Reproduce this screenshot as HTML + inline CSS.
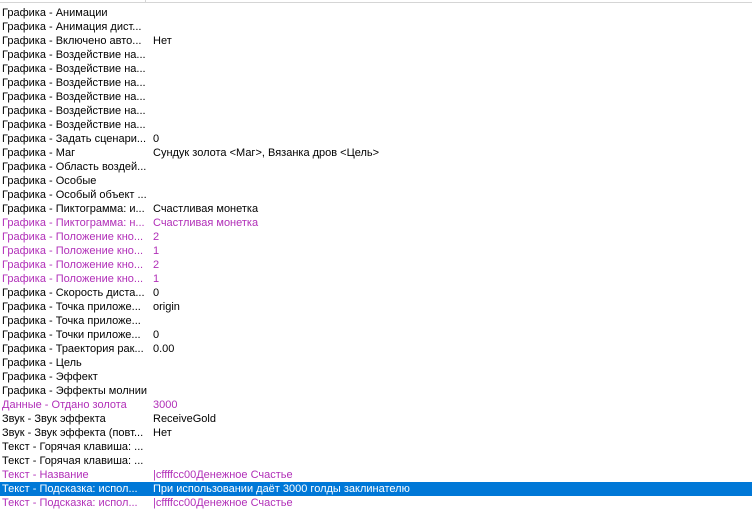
<!DOCTYPE html><html><head><meta charset="utf-8"><style>
body{margin:0;width:752px;height:511px;background:#fff;overflow:hidden;position:relative;font-family:"Liberation Sans","DejaVu Sans",sans-serif;font-size:11px;color:#000}
.hd{position:absolute;left:0;top:0;width:752px;height:2px;border-bottom:1px solid #d5d5d5}
.hd i{position:absolute;left:145px;top:0;width:1px;height:3px;background:#d5d5d5}
.r{position:absolute;left:0;width:752px;height:14px;line-height:15px;white-space:nowrap}
.r span{position:absolute;left:2px}.r b{font-weight:normal;position:absolute;left:153px}
.m{color:#b12fb8}.s{background:#0078d7;color:#fff}
</style></head><body><div class="hd"><i></i></div>
<div class="r" style="top:6px"><span>Графика - Анимации</span></div>
<div class="r" style="top:20px"><span>Графика - Анимация дист...</span></div>
<div class="r" style="top:34px"><span>Графика - Включено авто...</span><b>Нет</b></div>
<div class="r" style="top:48px"><span>Графика - Воздействие на...</span></div>
<div class="r" style="top:62px"><span>Графика - Воздействие на...</span></div>
<div class="r" style="top:76px"><span>Графика - Воздействие на...</span></div>
<div class="r" style="top:90px"><span>Графика - Воздействие на...</span></div>
<div class="r" style="top:104px"><span>Графика - Воздействие на...</span></div>
<div class="r" style="top:118px"><span>Графика - Воздействие на...</span></div>
<div class="r" style="top:132px"><span>Графика - Задать сценари...</span><b>0</b></div>
<div class="r" style="top:146px"><span>Графика - Маг</span><b>Сундук золота &lt;Маг&gt;, Вязанка дров &lt;Цель&gt;</b></div>
<div class="r" style="top:160px"><span>Графика - Область воздей...</span></div>
<div class="r" style="top:174px"><span>Графика - Особые</span></div>
<div class="r" style="top:188px"><span>Графика - Особый объект ...</span></div>
<div class="r" style="top:202px"><span>Графика - Пиктограмма: и...</span><b>Счастливая монетка</b></div>
<div class="r m" style="top:216px"><span>Графика - Пиктограмма: н...</span><b>Счастливая монетка</b></div>
<div class="r m" style="top:230px"><span>Графика - Положение кно...</span><b>2</b></div>
<div class="r m" style="top:244px"><span>Графика - Положение кно...</span><b>1</b></div>
<div class="r m" style="top:258px"><span>Графика - Положение кно...</span><b>2</b></div>
<div class="r m" style="top:272px"><span>Графика - Положение кно...</span><b>1</b></div>
<div class="r" style="top:286px"><span>Графика - Скорость диста...</span><b>0</b></div>
<div class="r" style="top:300px"><span>Графика - Точка приложе...</span><b>origin</b></div>
<div class="r" style="top:314px"><span>Графика - Точка приложе...</span></div>
<div class="r" style="top:328px"><span>Графика - Точки приложе...</span><b>0</b></div>
<div class="r" style="top:342px"><span>Графика - Траектория рак...</span><b>0.00</b></div>
<div class="r" style="top:356px"><span>Графика - Цель</span></div>
<div class="r" style="top:370px"><span>Графика - Эффект</span></div>
<div class="r" style="top:384px"><span>Графика - Эффекты молнии</span></div>
<div class="r m" style="top:398px"><span>Данные - Отдано золота</span><b>3000</b></div>
<div class="r" style="top:412px"><span>Звук - Звук эффекта</span><b>ReceiveGold</b></div>
<div class="r" style="top:426px"><span>Звук - Звук эффекта (повт...</span><b>Нет</b></div>
<div class="r" style="top:440px"><span>Текст - Горячая клавиша: ...</span></div>
<div class="r" style="top:454px"><span>Текст - Горячая клавиша: ...</span></div>
<div class="r m" style="top:468px"><span>Текст - Название</span><b>|cffffcc00Денежное Счастье</b></div>
<div class="r s" style="top:482px"><span>Текст - Подсказка: испол...</span><b>При использовании даёт 3000 голды заклинателю</b></div>
<div class="r m" style="top:496px"><span>Текст - Подсказка: испол...</span><b>|cffffcc00Денежное Счастье</b></div>
</body></html>
